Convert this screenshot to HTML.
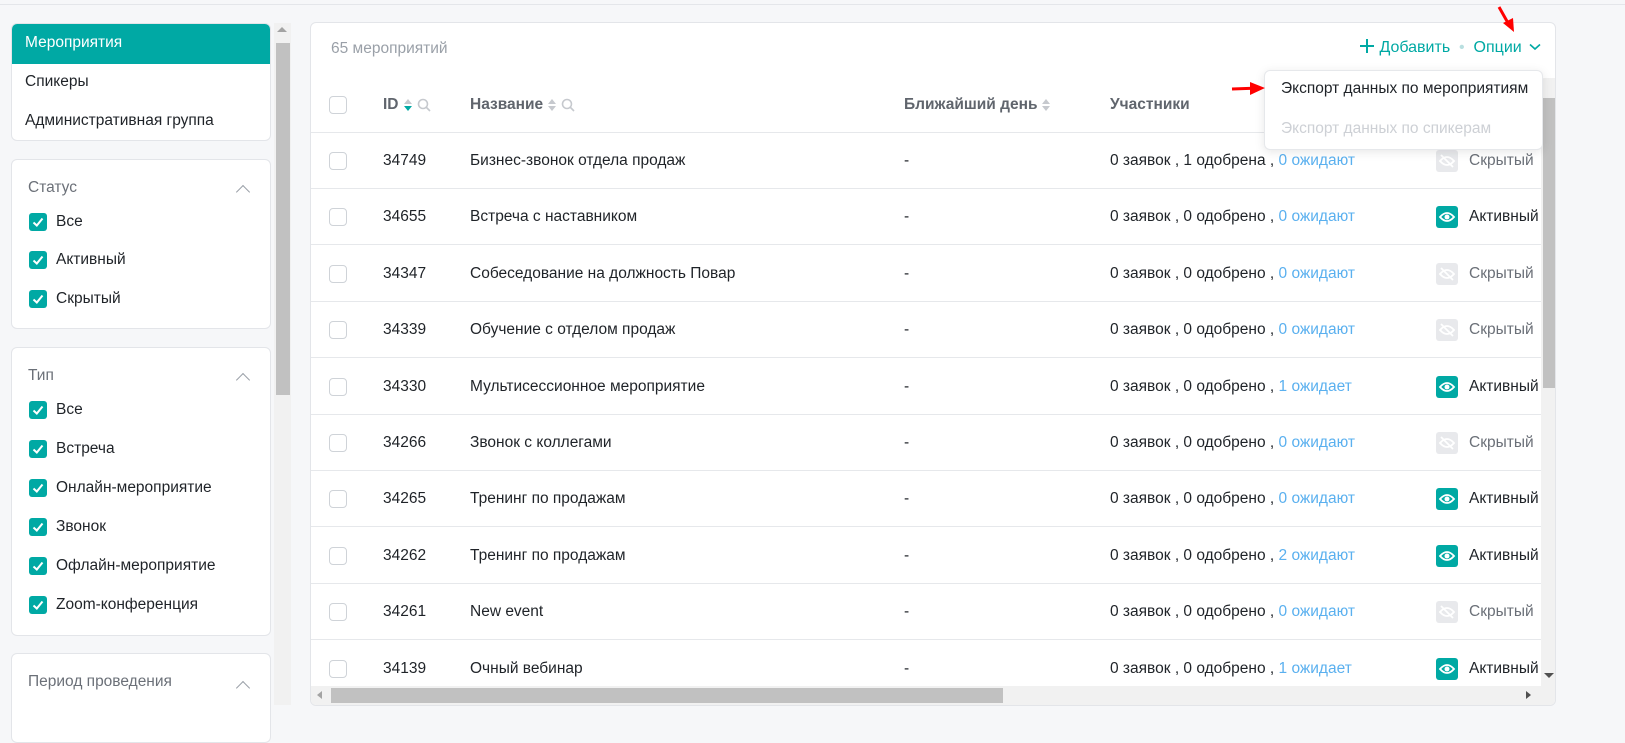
<!DOCTYPE html>
<html><head><meta charset="utf-8"><style>
*{box-sizing:border-box;margin:0;padding:0}
body{width:1625px;height:730px;overflow:hidden;background:#f6f7f9;font-family:"Liberation Sans",sans-serif;font-size:15.5px;color:#1f2328;position:relative}
.topline{position:absolute;left:0;top:4px;width:1625px;height:1px;background:#e4e6ea}
.card{position:absolute;left:11px;width:260px;background:#fff;border:1px solid #e3e5e9;border-radius:6px}
.abs{position:absolute;white-space:nowrap}
.cb{position:absolute;width:18px;height:18px;border-radius:3px;background:#00a9a4}
.cb svg{position:absolute;left:2px;top:2px}
.chev{position:absolute;width:10px;height:10px;border-left:1.5px solid #9aa0a8;border-top:1.5px solid #9aa0a8;transform:rotate(45deg)}
.main{position:absolute;left:310px;top:22px;width:1246px;height:684px;background:#fff;border:1px solid #e3e5e9;border-radius:6px;overflow:hidden}
.row{position:absolute;left:0;width:1230px;height:56px;border-bottom:1px solid #e6e8eb}
.ucb{position:absolute;left:18px;width:18px;height:18px;border:1px solid #cfd3d8;border-radius:4px;background:#fff}
.blue{color:#5ab0ef}
.ic{position:absolute;left:1125px;width:22px;height:22px;border-radius:3px}
.srt{display:inline-block;vertical-align:middle;margin-left:4px}
</style></head><body>
<div class="topline"></div>

<div class="card" style="top:23px;height:118px;overflow:hidden">
 <div style="position:absolute;left:0;top:0;width:260px;height:40px;background:#00a9a4"></div>
 <div class="abs" style="left:13px;top:10px;color:#fff">Мероприятия</div>
 <div class="abs" style="left:13px;top:49px">Спикеры</div>
 <div class="abs" style="left:13px;top:88px">Административная группа</div>
</div>
<div class="card" style="top:159px;height:170px">
 <div class="abs" style="left:16px;top:19px;color:#6b7078">Статус</div>
 <div class="chev" style="left:226px;top:27px"></div>
</div>
<div class="card" style="top:347px;height:289px">
 <div class="abs" style="left:16px;top:19px;color:#6b7078">Тип</div>
 <div class="chev" style="left:226px;top:27px"></div>
</div>
<div class="card" style="top:653px;height:90px">
 <div class="abs" style="left:16px;top:19px;color:#6b7078">Период проведения</div>
 <div class="chev" style="left:226px;top:29px"></div>
</div>

<div id="cbs"></div>

<div style="position:absolute;left:274px;top:23px;width:17px;height:682px;background:#f1f1f1"></div>
<div style="position:absolute;left:276px;top:43px;width:14px;height:352px;background:#c1c1c1"></div>
<div class="abs" style="left:277px;top:27px;width:0;height:0;border-left:5px solid transparent;border-right:5px solid transparent;border-bottom:5px solid #a3a3a3"></div>

<div class="main">
 <div class="abs" style="left:20px;top:17px;color:#9aa0a8">65 мероприятий</div>
 <div class="abs" style="left:1048px;top:15px;color:#00a9a4;font-size:16px;line-height:20px">
  <svg width="16" height="16" viewBox="0 0 16 16" style="vertical-align:-2px"><path d="M8 1V15M1 8H15" stroke="#00a9a4" stroke-width="2"/></svg>&nbsp;Добавить <span style="color:#b9dfe0">&nbsp;•&nbsp;</span> Опции <svg width="12" height="8" viewBox="0 0 12 8" style="vertical-align:1px;margin-left:3px"><path d="M1 1.5L6 6L11 1.5" stroke="#00a9a4" stroke-width="1.6" fill="none"/></svg></div>
 <div class="row" style="top:55px;height:55px">
  <div class="ucb" style="top:18px"></div>
  <div class="abs" style="left:72px;top:18px;color:#60656d;font-weight:bold">ID<svg class="srt" width="10" height="14" viewBox="0 0 10 14"><path d="M1 6L5 1L9 6Z" fill="#c6c9ce"/><path d="M1 8L5 13L9 8Z" fill="#00a9a4"/></svg><svg class="srt" width="14" height="14" viewBox="0 0 14 14"><circle cx="6" cy="6" r="4.5" stroke="#c6c9ce" stroke-width="1.6" fill="none"/><path d="M9.5 9.5L13 13" stroke="#c6c9ce" stroke-width="1.6"/></svg></div>
  <div class="abs" style="left:159px;top:18px;color:#60656d;font-weight:bold">Название<svg class="srt" width="10" height="14" viewBox="0 0 10 14"><path d="M1 6L5 1L9 6Z" fill="#c6c9ce"/><path d="M1 8L5 13L9 8Z" fill="#c6c9ce"/></svg><svg class="srt" width="14" height="14" viewBox="0 0 14 14"><circle cx="6" cy="6" r="4.5" stroke="#c6c9ce" stroke-width="1.6" fill="none"/><path d="M9.5 9.5L13 13" stroke="#c6c9ce" stroke-width="1.6"/></svg></div>
  <div class="abs" style="left:593px;top:18px;color:#60656d;font-weight:bold">Ближайший день<svg class="srt" width="10" height="14" viewBox="0 0 10 14"><path d="M1 6L5 1L9 6Z" fill="#c6c9ce"/><path d="M1 8L5 13L9 8Z" fill="#c6c9ce"/></svg></div>
  <div class="abs" style="left:799px;top:18px;color:#60656d;font-weight:bold">Участники</div>
 </div>
 <div id="rows"></div>
 <div style="position:absolute;left:1230px;top:55px;width:16px;height:608px;background:#f1f1f1"></div>
 <div style="position:absolute;left:1232px;top:75px;width:13px;height:290px;background:#c1c1c1"></div>
 <div class="abs" style="left:1233px;top:650px;width:0;height:0;border-left:5px solid transparent;border-right:5px solid transparent;border-top:5px solid #505050"></div>
 <div style="position:absolute;left:0;top:663px;width:1246px;height:21px;background:#f1f1f1"></div>
 <div style="position:absolute;left:20px;top:665px;width:672px;height:15px;background:#c1c1c1"></div>
 <div class="abs" style="left:6px;top:668px;width:0;height:0;border-top:4px solid transparent;border-bottom:4px solid transparent;border-right:5px solid #a3a3a3"></div>
 <div class="abs" style="left:1215px;top:668px;width:0;height:0;border-top:4px solid transparent;border-bottom:4px solid transparent;border-left:5px solid #505050"></div>
</div>

<div style="position:absolute;left:1264px;top:70px;width:279px;height:80px;background:#fff;border:1px solid #e6e8eb;border-radius:6px;box-shadow:0 2px 10px rgba(0,0,0,.1)">
 <div class="abs" style="left:16px;top:9px;color:#1f2328">Экспорт данных по мероприятиям</div>
 <div class="abs" style="left:16px;top:49px;color:#cdd0d5">Экспорт данных по спикерам</div>
</div>
<svg style="position:absolute;left:1230px;top:5px" width="40" height="90"><path d="M2 84 L30 83" stroke="#f00" stroke-width="3"/><path d="M20 77 L35 83 L20 90Z" fill="#f00"/></svg>
<svg style="position:absolute;left:1495px;top:5px" width="30" height="30"><path d="M4 2 L13 18" stroke="#f00" stroke-width="3"/><path d="M8 18 L19 27 L18 13Z" fill="#f00"/></svg>

<script>
var ck='<svg width="14" height="14" viewBox="0 0 14 14"><path d="M2.5 7.5 L5.8 10.5 L11.5 3.5" stroke="#fff" stroke-width="2" fill="none"/></svg>';
var s='';
function cbrow(y,t){return '<div class="cb" style="left:29px;top:'+(y-9)+'px">'+ck+'</div><div class="abs" style="left:56px;top:'+(y-9)+'px">'+t+'</div>';}
[[222,'Все'],[260,'Активный'],[299,'Скрытый'],[410,'Все'],[449,'Встреча'],[488,'Онлайн-мероприятие'],[527,'Звонок'],[566,'Офлайн-мероприятие'],[605,'Zoom-конференция']].forEach(function(a){s+=cbrow(a[0],a[1]);});
document.getElementById('cbs').innerHTML=s;
var d=[['34749','Бизнес-звонок отдела продаж','0 заявок , 1 одобрена , ','0 ожидают',0],
['34655','Встреча с наставником','0 заявок , 0 одобрено , ','0 ожидают',1],
['34347','Собеседование на должность Повар','0 заявок , 0 одобрено , ','0 ожидают',0],
['34339','Обучение с отделом продаж','0 заявок , 0 одобрено , ','0 ожидают',0],
['34330','Мультисессионное мероприятие','0 заявок , 0 одобрено , ','1 ожидает',1],
['34266','Звонок с коллегами','0 заявок , 0 одобрено , ','0 ожидают',0],
['34265','Тренинг по продажам','0 заявок , 0 одобрено , ','0 ожидают',1],
['34262','Тренинг по продажам','0 заявок , 0 одобрено , ','2 ожидают',1],
['34261','New event','0 заявок , 0 одобрено , ','0 ожидают',0],
['34139','Очный вебинар','0 заявок , 0 одобрено , ','1 ожидает',1]];
var eye='<svg width="22" height="22" viewBox="0 0 22 22"><path d="M4 11 Q11 3 18 11 Q11 19 4 11Z" stroke="#fff" stroke-width="1.8" fill="none"/><circle cx="11" cy="11" r="2.5" fill="#fff"/></svg>';
var eyeo='<svg width="22" height="22" viewBox="0 0 22 22"><path d="M4 11 Q11 3 18 11 Q11 19 4 11Z" stroke="#fff" stroke-width="1.8" fill="none"/><path d="M5 5 L17 17" stroke="#fff" stroke-width="1.8"/></svg>';
var r='';
d.forEach(function(x,i){var top=110+i*56.4;
r+='<div class="row" style="top:'+top+'px"><div class="ucb" style="top:19px"></div>'+
'<div class="abs" style="left:72px;top:19px">'+x[0]+'</div>'+
'<div class="abs" style="left:159px;top:19px">'+x[1]+'</div>'+
'<div class="abs" style="left:593px;top:19px">-</div>'+
'<div class="abs" style="left:799px;top:19px">'+x[2]+'<span class="blue">'+x[3]+'</span></div>'+
'<div class="ic" style="top:17px;background:'+(x[4]?'#00a9a4':'#e8e9ec')+'">'+(x[4]?eye:eyeo)+'</div>'+
'<div class="abs" style="left:1158px;top:19px;color:'+(x[4]?'#1f2328':'#6b7078')+'">'+(x[4]?'Активный':'Скрытый')+'</div></div>';});
document.getElementById('rows').innerHTML=r;
</script>
</body></html>
